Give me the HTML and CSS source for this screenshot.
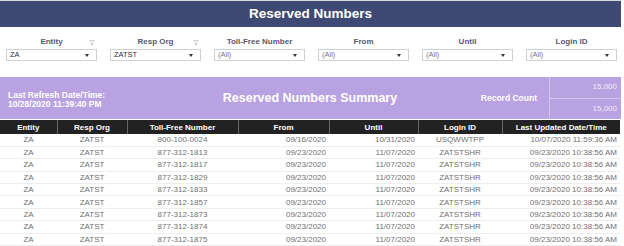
FILE: index.html
```html
<!DOCTYPE html>
<html lang="en">
<head>
    <meta charset="UTF-8">
    <title>Reserved Numbers</title>
    <link rel="stylesheet" href="styles.css">
</head>
<body>
    <div class="page">
        <div class="title-bar">Reserved Numbers</div>

        <div class="filters">
            <div class="filter">
                <div class="filter-label">Entity
                    <svg class="funnel" width="6" height="6" viewBox="0 0 6 6"><path d="M0.5 0.5 H5.5 L3.5 3 V5.5 L2.5 5 V3 Z" fill="none" stroke="#c4c4cc" stroke-width="0.8"/></svg>
                </div>
                <div class="select dark">ZA<span class="arrow"></span></div>
            </div>
            <div class="filter">
                <div class="filter-label">Resp Org
                    <svg class="funnel" width="6" height="6" viewBox="0 0 6 6"><path d="M0.5 0.5 H5.5 L3.5 3 V5.5 L2.5 5 V3 Z" fill="none" stroke="#c4c4cc" stroke-width="0.8"/></svg>
                </div>
                <div class="select dark">ZATST<span class="arrow"></span></div>
            </div>
            <div class="filter">
                <div class="filter-label">Toll-Free Number</div>
                <div class="select">(All)<span class="arrow"></span></div>
            </div>
            <div class="filter">
                <div class="filter-label">From</div>
                <div class="select">(All)<span class="arrow"></span></div>
            </div>
            <div class="filter">
                <div class="filter-label">Until</div>
                <div class="select">(All)<span class="arrow"></span></div>
            </div>
            <div class="filter">
                <div class="filter-label">Login ID</div>
                <div class="select">(All)<span class="arrow"></span></div>
            </div>
        </div>

        <div class="summary">
            <div class="refresh">Last Refresh Date/Time:<br>10/28/2020 11:39:40 PM</div>
            <div class="summary-title">Reserved Numbers Summary</div>
            <div class="record-label">Record Count</div>
            <div class="counts">
                <div class="count">15,000</div>
                <div class="count">15,000</div>
            </div>
        </div>

        <table class="grid">
            <colgroup>
                <col style="width:57px">
                <col style="width:70px">
                <col style="width:111px">
                <col style="width:91px">
                <col style="width:89px">
                <col style="width:84px">
                <col style="width:118px">
            </colgroup>
            <thead>
                <tr>
                    <th>Entity</th>
                    <th>Resp Org</th>
                    <th>Toll-Free Number</th>
                    <th>From</th>
                    <th>Until</th>
                    <th>Login ID</th>
                    <th>Last Updated Date/Time</th>
                </tr>
            </thead>
            <tbody>
                <tr><td>ZA</td><td>ZATST</td><td>800-100-0024</td><td class="r">09/16/2020</td><td class="r">10/31/2020</td><td>USQWWTPP</td><td class="r">10/07/2020 11:59:36 AM</td></tr>
                <tr><td>ZA</td><td>ZATST</td><td>877-312-1813</td><td class="r">09/23/2020</td><td class="r">11/07/2020</td><td>ZATSTSHR</td><td class="r">09/23/2020 10:38:56 AM</td></tr>
                <tr><td>ZA</td><td>ZATST</td><td>877-312-1817</td><td class="r">09/23/2020</td><td class="r">11/07/2020</td><td>ZATSTSHR</td><td class="r">09/23/2020 10:38:56 AM</td></tr>
                <tr><td>ZA</td><td>ZATST</td><td>877-312-1829</td><td class="r">09/23/2020</td><td class="r">11/07/2020</td><td>ZATSTSHR</td><td class="r">09/23/2020 10:38:56 AM</td></tr>
                <tr><td>ZA</td><td>ZATST</td><td>877-312-1833</td><td class="r">09/23/2020</td><td class="r">11/07/2020</td><td>ZATSTSHR</td><td class="r">09/23/2020 10:38:56 AM</td></tr>
                <tr><td>ZA</td><td>ZATST</td><td>877-312-1857</td><td class="r">09/23/2020</td><td class="r">11/07/2020</td><td>ZATSTSHR</td><td class="r">09/23/2020 10:38:56 AM</td></tr>
                <tr><td>ZA</td><td>ZATST</td><td>877-312-1873</td><td class="r">09/23/2020</td><td class="r">11/07/2020</td><td>ZATSTSHR</td><td class="r">09/23/2020 10:38:56 AM</td></tr>
                <tr><td>ZA</td><td>ZATST</td><td>877-312-1874</td><td class="r">09/23/2020</td><td class="r">11/07/2020</td><td>ZATSTSHR</td><td class="r">09/23/2020 10:38:56 AM</td></tr>
                <tr><td>ZA</td><td>ZATST</td><td>877-312-1875</td><td class="r">09/23/2020</td><td class="r">11/07/2020</td><td>ZATSTSHR</td><td class="r">09/23/2020 10:38:56 AM</td></tr>
            </tbody>
        </table>
    </div>
</body>
</html>
```

FILE: styles.css
```css
* { margin: 0; padding: 0; box-sizing: border-box; }

body {
    font-family: "Liberation Sans", Arial, sans-serif;
    background: #fff;
    overflow: hidden;
}

.page {
    width: 621px;
    border-top: 1px solid #d6d8e0;
}

.title-bar {
    background: #3e4a73;
    color: #fff;
    height: 26px;
    line-height: 26px;
    text-align: center;
    font-weight: bold;
    font-size: 13.5px;
}

.filters {
    display: flex;
    gap: 13px;
    padding: 9px 4px 0 6px;
    height: 50px;
}

.filter {
    width: 91px;
}

.filter-label {
    position: relative;
    text-align: center;
    font-size: 8px;
    font-weight: bold;
    color: #555a6e;
    height: 13px;
    line-height: 12px;
}

.funnel {
    position: absolute;
    right: 2px;
    top: 4px;
}

.select {
    position: relative;
    height: 12px;
    border: 1px solid #cfcfd6;
    font-size: 7.5px;
    line-height: 10px;
    padding-left: 3px;
    color: #777;
}

.select.dark {
    color: #333;
}

.arrow {
    position: absolute;
    right: 7px;
    top: 4px;
    border-left: 2px solid transparent;
    border-right: 2px solid transparent;
    border-top: 3px solid #333;
}

.summary {
    display: flex;
    align-items: center;
    background: #b9a2e1;
    height: 42px;
    color: #fff;
    font-weight: bold;
}

.refresh {
    width: 190px;
    padding-left: 8px;
    font-size: 8.5px;
    line-height: 9px;
    padding-top: 4px;
}

.summary-title {
    width: 240px;
    text-align: center;
    font-size: 12.5px;
}

.record-label {
    width: 119px;
    font-size: 8.5px;
    text-align: right;
    padding-right: 12px;
}

.counts {
    width: 72px;
    height: 100%;
    border-left: 1px solid #d4c6ef;
    display: flex;
    flex-direction: column;
}

.count {
    flex: 1;
    text-align: right;
    padding-right: 4px;
    font-size: 8px;
    font-weight: normal;
    color: #f0ecf9;
    line-height: 20px;
}

.count + .count {
    border-top: 1px solid #d4c6ef;
}

.grid {
    width: 620px;
    border-collapse: collapse;
    table-layout: fixed;
    margin-top: 1px;
    font-size: 8px;
}

.grid th {
    background: #222;
    color: #fff;
    font-weight: bold;
    height: 14px;
    line-height: 13px;
    border-left: 1px solid #666;
    text-align: center;
}

.grid th:first-child {
    border-left: none;
}

.grid td {
    height: 12.4px;
    line-height: 10px;
    padding-top: 1px;
    color: #707070;
    text-align: center;
    border-bottom: 1px solid #eeeeee;
    white-space: nowrap;
}

.grid td.r {
    text-align: right;
    padding-right: 3px;
}
```
